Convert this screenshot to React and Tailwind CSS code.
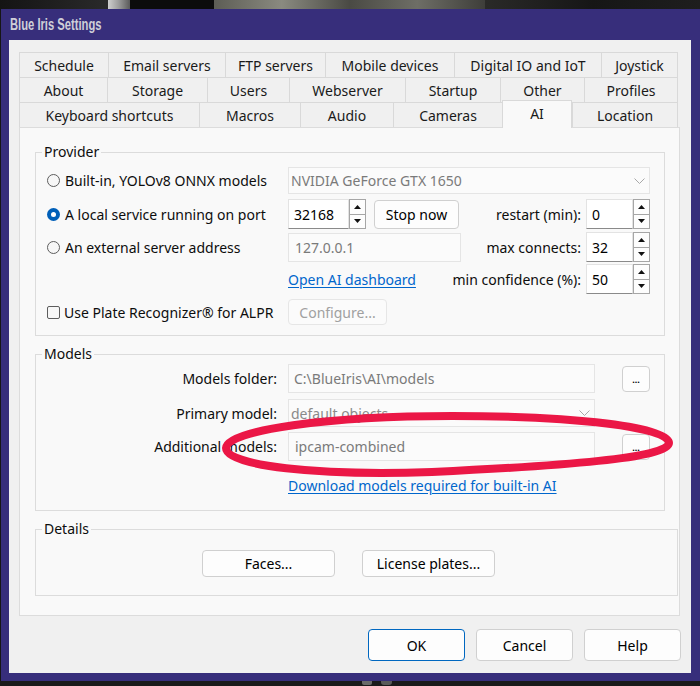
import React from "react";

const rows = [
  [
    ["Schedule", "w-[89px]"],
    ["Email servers", "w-[117px]"],
    ["FTP servers", "w-[100px]"],
    ["Mobile devices", "w-[129px]"],
    ["Digital IO and IoT", "w-[147px]"],
    ["Joystick", "w-[77px]"],
  ],
  [
    ["About", "w-[88px]"],
    ["Storage", "w-[100px]"],
    ["Users", "w-[82px]"],
    ["Webserver", "w-[116px]"],
    ["Startup", "w-[95px]"],
    ["Other", "w-[84px]"],
    ["Profiles", "w-[94px]"],
  ],
  [
    ["Keyboard shortcuts", "w-[180px]"],
    ["Macros", "w-[101px]"],
    ["Audio", "w-[93px]"],
    ["Cameras", "w-[109px]"],
    ["AI", "w-[70px]", true],
    ["Location", "w-[106px]"],
  ],
];

function TabRow({ tabs }) {
  return (
    <div className="flex items-start h-[25px]">
      {tabs.map(([label, w, sel], i) => {
        const last = i === tabs.length - 1;
        if (sel) {
          return (
            <div
              key={label}
              className={`${w} h-[28px] -mt-[2px] relative z-10 flex items-center justify-center pb-[3px] border-t border-l border-r border-[#d9d9d9] bg-[#f9f9f9]`}
            >
              {label}
            </div>
          );
        }
        return (
          <div
            key={label}
            className={`${w} h-[25px] flex items-center justify-center border-t border-l border-[#d9d9d9] bg-[#f0f0f0] ${last ? "border-r" : ""}`}
          >
            {label}
          </div>
        );
      })}
    </div>
  );
}

function Radio({ checked }) {
  if (checked) {
    return (
      <span className="w-[13px] h-[13px] rounded-full bg-[#005fb8] flex items-center justify-center shrink-0">
        <span className="w-[5px] h-[5px] rounded-full bg-white" />
      </span>
    );
  }
  return <span className="w-[13px] h-[13px] rounded-full border border-[#5d5d5d] bg-[#f7f7f7] shrink-0" />;
}

function Arrows() {
  return (
    <div className="w-[17px] h-full flex flex-col border border-[#a6a6a6] bg-[#fdfdfd]">
      <div className="flex-1 flex items-center justify-center border-b border-[#a6a6a6]">
        <svg width="7" height="4" viewBox="0 0 7 4">
          <path d="M0 4L3.5 0L7 4Z" fill="#111" />
        </svg>
      </div>
      <div className="flex-1 flex items-center justify-center">
        <svg width="7" height="4" viewBox="0 0 7 4">
          <path d="M0 0L3.5 4L7 0Z" fill="#111" />
        </svg>
      </div>
    </div>
  );
}

function Spin({ value, cls }) {
  return (
    <div className={`flex h-[30px] ${cls}`}>
      <div className="flex-1 h-full bg-white border border-[#e3e3e3] border-b-[#8a8a8a] flex items-center pl-[5px] text-black">
        {value}
      </div>
      <Arrows />
    </div>
  );
}

function Chevron() {
  return (
    <svg width="11" height="6" viewBox="0 0 11 6" className="ml-auto mr-[4px]">
      <path d="M0.5 0.5L5.5 5.5L10.5 0.5" fill="none" stroke="#a8a8a8" strokeWidth="1" />
    </svg>
  );
}

function Btn({ children, cls, disabled, primary }) {
  return (
    <div
      className={`${cls} flex items-center justify-center rounded-[4px] border ${
        primary ? "border-[#0067c0]" : disabled ? "border-[#e6e6e6]" : "border-[#d0d0d0]"
      } ${disabled ? "bg-[#fbfbfb] text-[#a0a0a0]" : "bg-[#fdfdfd] text-black"}`}
    >
      {children}
    </div>
  );
}

function DotsBtn() {
  return (
    <div className="ml-[27px] w-[28px] h-[26px] rounded-[4px] border border-[#d0d0d0] bg-[#fdfdfd] flex items-end justify-center pb-[7px]">
      <span className="text-[9px] leading-[9px] font-bold text-black">...</span>
    </div>
  );
}

export default function App() {
  return (
    <div className="w-[700px] h-[686px] bg-[#161616] relative overflow-hidden font-['Noto_Sans',sans-serif] text-[14px] text-[#0d0d0d]">
      {/* background strip above window */}
      <div className="h-[9px] flex">
        <div className="w-[108px] h-full bg-[linear-gradient(90deg,#141414,#2a2a2a)]" />
        <div className="w-[22px] h-full bg-[linear-gradient(90deg,#cfcfcf,#9a9a9a,#5a5a5a)]" />
        <div className="w-[84px] h-full bg-[#0c0c0c]" />
        <div className="w-[271px] h-full bg-[linear-gradient(90deg,#5d5d55,#8a8a80,#4a4a44,#6e6e66,#3e3e3a)]" />
        <div className="flex-1 h-full bg-[linear-gradient(90deg,#2a2a28,#161616,#1e1e1e)]" />
      </div>

      {/* window */}
      <div className="ml-[1px] w-[699px] h-[672px] bg-[#372e7b] flex flex-col">
        <div className="h-[31px] flex items-center pl-[9px]">
          <span className="font-['Liberation_Sans',sans-serif] font-bold text-[16px] text-[#cfcfd8] scale-x-[0.7] origin-left whitespace-nowrap">
            Blue Iris Settings
          </span>
        </div>
        <div className="ml-[8px] w-[682px] h-[633px] bg-[#f0f0f0] pt-[12px] pl-[10px]">
          {/* tabs */}
          <div className="w-[659px] text-[#1a1a1a]">
            <TabRow tabs={rows[0]} />
            <TabRow tabs={rows[1]} />
            <TabRow tabs={rows[2]} />
          </div>

          {/* panel */}
          <div className="w-[661px] h-[489px] border border-[#dcdcdc] bg-[#f9f9f9] flex flex-col">
            {/* Provider */}
            <fieldset className="ml-[15px] mt-[14px] w-[630px] border border-[#dcdcdc] pb-[10px]">
              <legend className="ml-[6px] px-[2px] leading-[20px]">Provider</legend>
              <div className="flex items-center h-[27px] mt-[5px]">
                <div className="w-[252px] flex items-center pl-[11px] gap-[5px]">
                  <Radio />
                  <span>Built-in, YOLOv8 ONNX models</span>
                </div>
                <div className="w-[362px] h-[27px] border border-[#e5e5e5] bg-[#fbfbfb] flex items-center pl-[2px] text-[#7a7a7a]">
                  NVIDIA GeForce GTX 1650
                  <Chevron />
                </div>
              </div>
              <div className="flex items-center h-[30px] mt-[5px]">
                <div className="w-[252px] flex items-center pl-[11px] gap-[5px]">
                  <Radio checked />
                  <span>A local service running on port</span>
                </div>
                <Spin value="32168" cls="w-[78px]" />
                <Btn cls="ml-[8px] w-[85px] h-[29px]">Stop now</Btn>
                <div className="flex-1 text-right pr-[5px]">restart (min):</div>
                <Spin value="0" cls="w-[64px] mr-[14px]" />
              </div>
              <div className="flex items-center h-[30px] mt-[3px]">
                <div className="w-[252px] flex items-center pl-[11px] gap-[5px]">
                  <Radio />
                  <span>An external server address</span>
                </div>
                <div className="w-[173px] h-[29px] border border-[#e5e5e5] bg-[#fbfbfb] flex items-center pl-[6px] text-[#7a7a7a]">
                  127.0.0.1
                </div>
                <div className="flex-1 text-right pr-[5px]">max connects:</div>
                <Spin value="32" cls="w-[64px] mr-[14px]" />
              </div>
              <div className="flex items-center h-[30px] mt-[2px]">
                <div className="w-[252px]" />
                <span className="text-[#0066cc] underline underline-offset-2">Open AI dashboard</span>
                <div className="flex-1 text-right pr-[5px]">min confidence (%):</div>
                <Spin value="50" cls="w-[64px] mr-[14px]" />
              </div>
              <div className="flex items-center h-[26px] mt-[5px]">
                <div className="w-[252px] flex items-center pl-[11px] gap-[4px]">
                  <span className="w-[13px] h-[13px] rounded-[2px] border border-[#5d5d5d] bg-[#f7f7f7] shrink-0" />
                  <span>Use Plate Recognizer® for ALPR</span>
                </div>
                <Btn cls="w-[99px] h-[26px]" disabled>
                  Configure...
                </Btn>
              </div>
            </fieldset>

            {/* Models */}
            <fieldset className="ml-[15px] mt-[8px] w-[630px] border border-[#dcdcdc] pb-[15px]">
              <legend className="ml-[6px] px-[2px] leading-[20px]">Models</legend>
              <div className="flex items-center h-[29px]">
                <div className="w-[241px] text-right">Models folder:</div>
                <div className="ml-[11px] w-[307px] h-[29px] border border-[#e5e5e5] bg-[#fbfbfb] flex items-center pl-[5px] text-[#7a7a7a]">
                  {"C:\\BlueIris\\AI\\models"}
                </div>
                <DotsBtn />
              </div>
              <div className="flex items-center h-[28px] mt-[6px]">
                <div className="w-[241px] text-right">Primary model:</div>
                <div className="ml-[11px] w-[307px] h-[28px] border border-[#e5e5e5] bg-[#fbfbfb] flex items-center pl-[2px] text-[#8a8a8a]">
                  default objects
                  <Chevron />
                </div>
              </div>
              <div className="flex items-center h-[29px] mt-[5px]">
                <div className="w-[241px] text-right">Additional models:</div>
                <div className="ml-[11px] w-[307px] h-[29px] border border-[#e5e5e5] bg-[#fbfbfb] flex items-center pl-[6px] text-[#7a7a7a]">
                  ipcam-combined
                </div>
                <DotsBtn />
              </div>
              <div className="flex items-center h-[20px] mt-[14px]">
                <div className="w-[252px]" />
                <span className="text-[#0066cc] underline underline-offset-2">
                  Download models required for built-in AI
                </span>
              </div>
            </fieldset>

            {/* Details */}
            <fieldset className="ml-[15px] mt-[8px] w-[643px] border border-[#dcdcdc] pb-[18px]">
              <legend className="ml-[6px] px-[2px] leading-[20px]">Details</legend>
              <div className="flex items-center mt-[11px] h-[27px]">
                <Btn cls="ml-[166px] w-[133px] h-[27px]">Faces...</Btn>
                <Btn cls="ml-[27px] w-[133px] h-[27px]">License plates...</Btn>
              </div>
            </fieldset>
          </div>

          {/* bottom buttons */}
          <div className="w-[662px] mt-[13px] flex justify-end gap-[11px]">
            <Btn cls="w-[97px] h-[32px]" primary>
              OK
            </Btn>
            <Btn cls="w-[97px] h-[32px]">Cancel</Btn>
            <Btn cls="w-[97px] h-[32px]">Help</Btn>
          </div>
        </div>
      </div>

      {/* strip below window */}
      <div className="h-[5px] flex bg-[#1a1a1a]">
        <div className="ml-[362px] w-[10px] h-[4px] bg-[#6a6a6a] rounded-b-[2px]" />
        <div className="ml-[9px] w-[11px] h-[4px] bg-[#5a5a5a] rounded-b-[3px]" />
      </div>

      {/* red annotation ellipse */}
      <svg
        className="absolute left-0 top-0 pointer-events-none"
        width="700"
        height="686"
        viewBox="0 0 700 686"
      >
        <path
          d="M226 448 C226 430 330 416 452 416 C575 416 669 427 669 443 C669 458 560 466 432 472 C318 476 226 466 226 448 Z"
          fill="none"
          stroke="#eb1746"
          strokeWidth="8"
        />
      </svg>
    </div>
  );
}
